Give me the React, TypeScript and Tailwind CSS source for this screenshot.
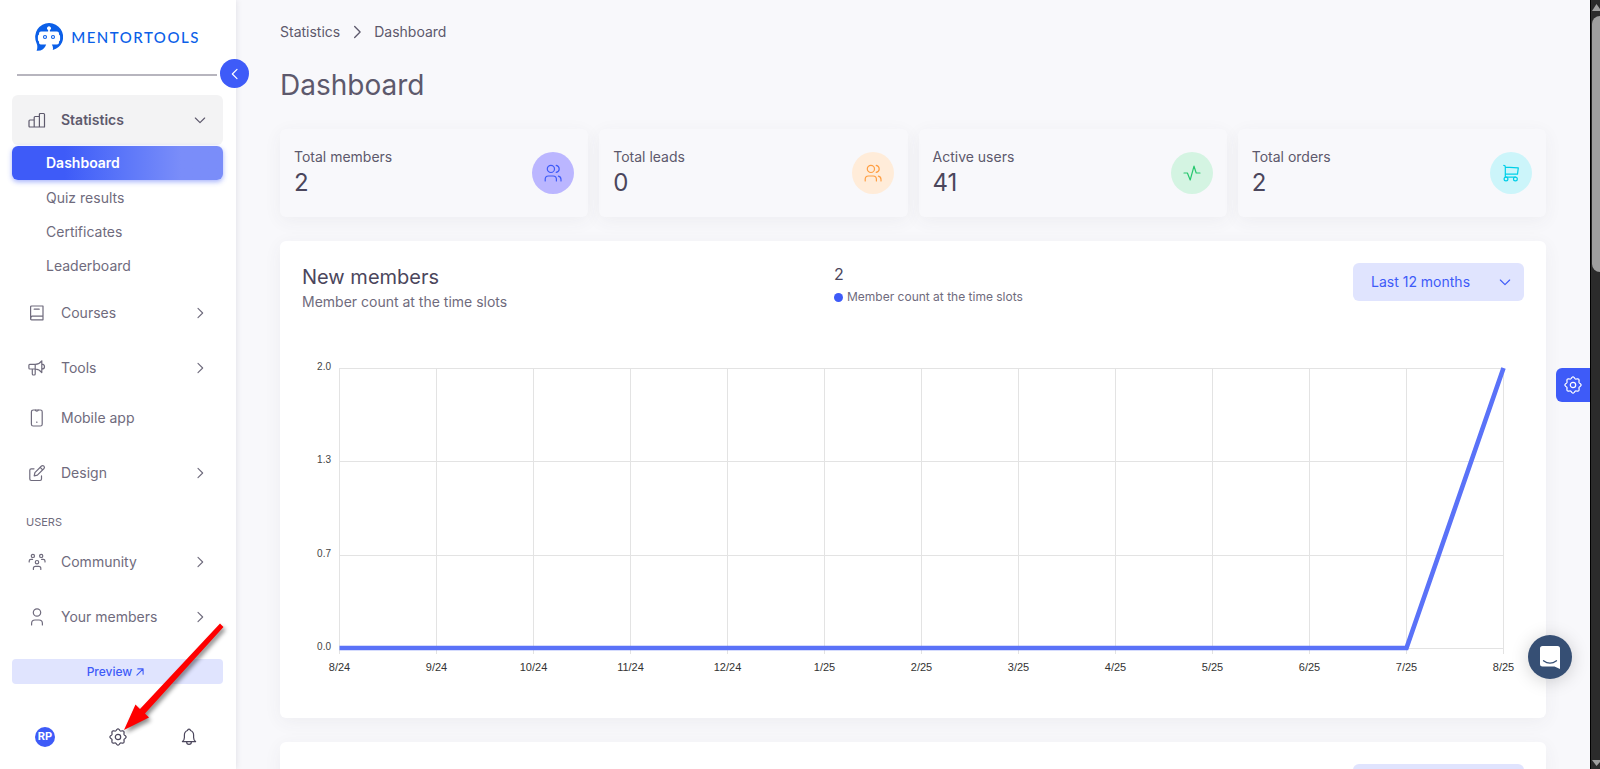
import type { ReactNode } from "react";

type IconProps = { className?: string; children?: ReactNode };

function Icon({ className = "size-[18px]", children }: IconProps) {
  return (
    <svg
      viewBox="0 0 18 18"
      fill="none"
      stroke="currentColor"
      strokeWidth="1.2"
      strokeLinecap="round"
      strokeLinejoin="round"
      aria-hidden="true"
      className={`shrink-0 ${className}`}
    >
      {children}
    </svg>
  );
}

const StatsIcon = () => (
  <Icon>
    <path d="M1 9.9q0-.9.9-.9H6.2V16H1.9q-.9 0-.9-.9zM6.2 9V6.4q0-.9.9-.9h4.3V16H6.2M11.4 5.500V3.400q0-.9.9-.9h3.300q.9 0 .9.9V16h-5.100" />
  </Icon>
);

const BookIcon = () => (
  <Icon>
    <path d="M3.6 2h11.4v13.8H3.6q-1 0-1-1V3q0-1 1-1zM2.8 14.4q0-2.2 1.4-2.2H15M6.2 5.2h5" />
  </Icon>
);

const MegaphoneIcon = () => (
  <Icon>
    <path d="M1.8 5.4h5.4V10H1.8q-.9 0-.9-.9V6.3q0-.9.9-.9zM7.2 5.4q4.2-.3 6.6-3.6v11.8q-2.4-3.3-6.6-3.6M4.3 10v5q0 1 1 1h.9q1 0 1-1v-5M13.8 5.2q2.7.3 2.7 2.5t-2.7 2.5" />
  </Icon>
);

const PhoneIcon = () => (
  <Icon>
    <rect x="3.4" y="1" width="10.8" height="16" rx="1.8" />
    <path d="M7.4 1.2q.2 1 1.4 1t1.4-1M8.6 13.2h.4" />
  </Icon>
);

const EditIcon = () => (
  <Icon>
    <path d="M6 4.8H3.2q-1.4 0-1.4 1.4v8.9q0 1.4 1.4 1.4h8.9q1.4 0 1.4-1.4v-3.2M6.2 11.8l.7-3.2 6.6-6.6q1.2-1 2.4.1 1.1 1.2.1 2.4l-6.6 6.6zM12.2 3.4l2.4 2.4" />
  </Icon>
);

const CommunityIcon = () => (
  <Icon>
    <circle cx="4.9" cy="2.9" r="1.6" />
    <circle cx="13.2" cy="2.9" r="1.6" />
    <circle cx="9" cy="9.2" r="1.7" />
    <path d="M1.2 9V8q0-1.6 1.8-1.6h1.6M17 9V8q0-1.6-1.8-1.6h-1.6M5.4 16.4v-1.1q0-1.9 2-1.9h3.4q2 0 2 1.9v1.1" />
  </Icon>
);

const UserIcon = () => (
  <Icon>
    <circle cx="9" cy="4.5" r="3.7" />
    <path d="M3.6 17v-1.6q0-3.4 3.4-3.4h4q3.4 0 3.4 3.4V17" />
  </Icon>
);

const UsersIcon = () => (
  <Icon>
    <circle cx="6.9" cy="4.9" r="3.6" />
    <path d="M1.2 17v-1.8q0-3.2 3.2-3.2h4.8q3.2 0 3.2 3.2V17M12.2 1.4q3 .8 3 3.5t-3 3.5M14.4 12.2q2.6.6 2.6 3.2V17" />
  </Icon>
);

const PulseIcon = () => (
  <Icon>
    <path d="M1 9h3.4l2.8 7L11 2.2 13.2 9H17" />
  </Icon>
);

const CartIcon = () => (
  <Icon>
    <circle cx="4" cy="15" r="1.9" />
    <circle cx="13.4" cy="15" r="1.9" />
    <path d="M1.8 1.4q1.5 0 1.5 1.4v10.3h10.1M3.3 3.2l13 .7-.8 6.2H3.3" />
  </Icon>
);

const BellIcon = () => (
  <Icon>
    <path d="M2.4 13.6q2-1.5 2-4.2V7q0-3.4 3.2-4.5a1.4 1.4 0 0 1 2.8 0q3.2 1.1 3.2 4.5v2.4q0 2.7 2 4.2zM6.6 13.8q0 2.6 2.4 2.6t2.4-2.6" />
  </Icon>
);

// eight soft teeth around the centre
const gearOutline = Array.from({ length: 96 }, (_, i) => {
  const a = (i / 96) * Math.PI * 2;
  const r = 7.3 + 0.8 * Math.cos(8 * a);
  return `${(9 + r * Math.cos(a)).toFixed(2)},${(9 + r * Math.sin(a)).toFixed(2)}`;
}).join(" ");

const GearIcon = () => (
  <Icon>
    <polygon points={gearOutline} />
    <circle cx="9" cy="9" r="2.7" />
  </Icon>
);

const ChevronRight = ({ className = "size-3" }: IconProps) => (
  <Icon className={className}>
    <path strokeWidth="1.7" d="M6 2l7 7-7 7" />
  </Icon>
);

const ChevronDown = ({ className = "size-3" }: IconProps) => (
  <Icon className={className}>
    <path strokeWidth="1.7" d="M2 6l7 7 7-7" />
  </Icon>
);

function Logo() {
  return (
    <a href="#" className="flex items-center gap-2 text-[#0b5fe8]">
      <svg viewBox="0 0 28 28" className="size-7 shrink-0" aria-hidden="true">
        <path
          fill="currentColor"
          d="M14 0A14 14 0 0 0 1.3 19.5Q3.2 23.5 1.6 27.8Q9 28.2 11.2 21.5H5.8Q4 21.5 4 19.5V18.6Q2.9 18.2 2.9 16.5V13.5Q2.9 12 4 11.6V10.5Q4 8.500 6 8.500H13.1V6.9A1.9 1.9 0 1 1 14.9 6.9V8.5H22Q24 8.5 24 10.5V11.6Q25.1 12 25.1 13.5V16.5Q25.1 18.2 24 18.6V19.5Q24 21.5 22 21.5H16.8Q18.5 24 17.8 27Q24.5 25 27 19.5A14 14 0 0 0 14 0Z"
        />
        <circle cx="10" cy="14" r="1.5" fill="none" stroke="currentColor" strokeWidth="1.1" />
        <circle cx="18" cy="14" r="1.5" fill="none" stroke="currentColor" strokeWidth="1.1" />
      </svg>
      <span className="font-['Lato',sans-serif] text-[15px] leading-5 font-medium tracking-widest">
        MENTORTOOLS
      </span>
    </a>
  );
}

type NavItemProps = { icon: ReactNode; label: string; expandable?: boolean };

function NavItem({ icon, label, expandable = true }: NavItemProps) {
  if (!expandable) {
    return (
      <a href="#" className="flex h-[50px] items-center gap-[15px] px-4">
        {icon}
        {label}
      </a>
    );
  }
  return (
    <button type="button" className="mt-[5px] flex h-[50px] items-center gap-[15px] px-4">
      {icon}
      {label}
      <ChevronRight className="mr-px ml-auto size-3" />
    </button>
  );
}

function Sidebar() {
  return (
    <aside className="relative z-10 flex w-[236px] shrink-0 flex-col bg-white pr-[13px] pl-3 text-sm text-[#6f6b7d] shadow-[0_0_6px_rgba(75,70,92,0.15)]">
      <div className="flex h-[74px] shrink-0 justify-center pt-[23px]">
        <div className="h-7">
          <Logo />
        </div>
      </div>
      <hr className="mr-[6px] ml-[5px] border-t-2 border-[#b7b5be]" />
      <button
        type="button"
        aria-label="Collapse menu"
        className="absolute top-[59px] -right-[13px] flex size-[29px] items-center justify-center rounded-full bg-[#3e5bf8] text-white"
      >
        <Icon className="size-3">
          <path strokeWidth="1.8" d="M12 2L5 9l7 7" />
        </Icon>
      </button>

      <nav className="mt-[19px] flex flex-col">
        <button
          type="button"
          className="flex h-[50px] shrink-0 items-center gap-[15px] rounded-md bg-[#f3f3f4] px-4 font-semibold text-[#5d596c]"
        >
          <StatsIcon />
          Statistics
          <ChevronDown className="mr-px ml-auto size-3" />
        </button>
        <a
          href="#"
          className="mt-px mb-px flex h-[34px] items-center rounded-md bg-linear-to-r from-[#3e5bf8] from-25% to-[#7a8df9] to-80% pl-[34px] font-semibold text-white shadow-[0_2px_5px_rgba(62,91,248,0.45)]"
        >
          Dashboard
        </a>
        <a href="#" className="flex h-[34px] items-center pl-[34px]">Quiz results</a>
        <a href="#" className="flex h-[34px] items-center pl-[34px]">Certificates</a>
        <a href="#" className="flex h-[34px] items-center pl-[34px]">Leaderboard</a>

        <NavItem icon={<BookIcon />} label="Courses" />
        <NavItem icon={<MegaphoneIcon />} label="Tools" />
        <NavItem icon={<PhoneIcon />} label="Mobile app" expandable={false} />
        <NavItem icon={<EditIcon />} label="Design" />
        <h2 className="px-[14px] pt-4 pb-0.5 text-[11px] leading-4">USERS</h2>
        <NavItem icon={<CommunityIcon />} label="Community" />
        <NavItem icon={<UserIcon />} label="Your members" />
      </nav>

      <a
        href="#"
        className="mt-[17px] flex h-[25px] shrink-0 items-center justify-center gap-1 rounded bg-[#e0e4fe] pr-1 text-xs font-medium text-[#3e5bf8]"
      >
        Preview
        <Icon className="size-2">
          <path strokeWidth="2.4" d="M2 16L16 2M4 2h12v12" />
        </Icon>
      </a>
      <div className="mt-10 flex h-[26px] shrink-0 items-center justify-between pr-[25px] pl-[23px] text-[#4b465c]">
        <button
          type="button"
          className="flex size-5 items-center justify-center rounded-full bg-[#3e5bf8] text-[11px] font-bold text-white"
        >
          RP
        </button>
        <button type="button" aria-label="Settings">
          <GearIcon />
        </button>
        <button type="button" aria-label="Notifications">
          <BellIcon />
        </button>
      </div>
    </aside>
  );
}

const stats = [
  { label: "Total members", value: 2, icon: <UsersIcon />, color: "bg-[#bbb6ff] text-[#3e5bf8]" },
  { label: "Total leads", value: 0, icon: <UsersIcon />, color: "bg-[#ffecd9] text-[#ff9f43]" },
  { label: "Active users", value: 41, icon: <PulseIcon />, color: "bg-[#d4f4e2] text-[#28c76f]" },
  { label: "Total orders", value: 2, icon: <CartIcon />, color: "bg-[#ccf5fa] text-[#00cfe8]" },
];

const months = [
  "8/24", "9/24", "10/24", "11/24", "12/24", "1/25", "2/25",
  "3/25", "4/25", "5/25", "6/25", "7/25", "8/25",
];
const members = [0, 0, 0, 0, 0, 0, 0, 0, 0, 0, 0, 0, 2];
const ticks = ["2.0", "1.3", "0.7", "0.0"];

const chartX = (i: number) => 37.5 + i * 97;
const chartY = (v: number) => 298 - v * 140;

function LineChart() {
  return (
    <svg
      viewBox="0 0 1222 325"
      role="img"
      aria-label="New members per month"
      className="block w-full overflow-visible font-['Liberation_Sans',Arial,sans-serif]"
    >
      {ticks.map((tick, i) => {
        const y = 18.5 + Math.round((i * 280) / 3);
        return (
          <g key={tick}>
            <line x1="37" x2="1202" y1={y} y2={y} stroke="#e3e3e3" />
            <text x="29" y={y + 1} textAnchor="end" fontSize="10" fill="#444">
              {tick}
            </text>
          </g>
        );
      })}
      {months.map((month, i) => (
        <g key={month}>
          <line x1={chartX(i)} x2={chartX(i)} y1="18" y2="304" stroke="#e3e3e3" />
          <text x={chartX(i)} y="321" textAnchor="middle" fontSize="11" fill="#333">
            {month}
          </text>
        </g>
      ))}
      <polyline
        points={members.map((v, i) => `${chartX(i)},${chartY(v)}`).join(" ")}
        fill="none"
        stroke="#5a72f8"
        strokeWidth="4.6"
      />
    </svg>
  );
}

type ReportCardProps = { id: string; title: string; caption: string; total: number };

function ReportCard({ id, title, caption, total }: ReportCardProps) {
  return (
    <section className="mt-6 shrink-0 rounded-md bg-white px-[22px] pt-[22px] pb-[43px] shadow-[0_4px_18px_rgba(75,70,92,0.06)]">
      <div className="grid grid-cols-[532px_1fr_auto] items-start">
        <div>
          <h2 className="text-xl leading-7 text-[#4b465c]">{title}</h2>
          <p className="text-sm leading-[22px] text-[#6f6b7d]">{caption}</p>
        </div>
        <div>
          <p className="text-base leading-[22px] text-[#4b465c]">{total}</p>
          <p className="flex items-center gap-1 text-xs leading-6 text-[#6f6b7d]">
            <span className="size-[9px] rounded-full bg-[#3e5bf8]" />
            {caption}
          </p>
        </div>
        <div className="relative text-[#3e5bf8]">
          <select
            id={id}
            aria-label="Period"
            className="block h-[38px] w-[171px] appearance-none rounded-md bg-[#e0e4fe] px-[18px] text-sm"
          >
            <option>Last 12 months</option>
          </select>
          <ChevronDown className="pointer-events-none absolute top-[13px] right-[13px] size-3" />
        </div>
      </div>
      <div className="mt-[37px]">
        <LineChart />
      </div>
    </section>
  );
}

function Scrollbar() {
  return (
    <div className="flex w-[10px] shrink-0 flex-col items-end border-l border-black bg-[#2b2b2b]" aria-hidden="true">
      <svg viewBox="0 0 8 12" className="h-3 w-2">
        <path d="M0 11L4.5 4L8 9V11Z" fill="#9f9f9f" />
      </svg>
      <div className="mt-1 h-1/3 w-2 rounded-l-full bg-[#9f9f9f]" />
      <svg viewBox="0 0 8 12" className="mt-auto h-3 w-2">
        <path d="M0 3H8V5L4.5 9Z" fill="#9f9f9f" />
      </svg>
    </div>
  );
}

function PointerArrow() {
  return (
    <svg
      viewBox="0 0 110 115"
      className="pointer-events-none absolute bottom-9 left-[120px] z-20 h-[115px] w-[110px] drop-shadow-[2px_3px_2px_rgba(0,0,0,0.45)]"
      aria-hidden="true"
    >
      <path d="M4 112L15.5 86.5L20 91L100 5.500L103.500 9L25 95.500L29 99.500Z" fill="#fe0000" />
    </svg>
  );
}

export default function App() {
  return (
    <div className="relative flex h-screen overflow-hidden bg-[#f8f8fb] font-['Inter',sans-serif]">
      <Sidebar />

      <main className="flex min-w-0 flex-1 flex-col overflow-y-auto px-11 pb-6 text-[#5d596c] [scrollbar-width:none]">
        <nav aria-label="Breadcrumb" className="mt-5 flex shrink-0 items-center gap-[10px] text-sm leading-6">
          <a href="#">Statistics</a>
          <ChevronRight className="size-[14px]" />
          <span>Dashboard</span>
        </nav>
        <h1 className="mt-[21px] shrink-0 text-[28px] leading-10">Dashboard</h1>

        <div className="mt-6 grid shrink-0 grid-cols-4 gap-[11px]">
          {stats.map((stat) => (
            <div
              key={stat.label}
              className="flex h-[88px] items-center justify-between rounded-md px-[14px] shadow-[0_4px_18px_rgba(75,70,92,0.06)]"
            >
              <div>
                <p className="text-sm leading-5">{stat.label}</p>
                <p className="text-2xl leading-8 text-[#4b465c]">{stat.value}</p>
              </div>
              <div className={`flex size-[42px] items-center justify-center rounded-full ${stat.color}`}>
                {stat.icon}
              </div>
            </div>
          ))}
        </div>

        <ReportCard id="members-period" title="New members" caption="Member count at the time slots" total={2} />
        <ReportCard id="leads-period" title="New leads" caption="Lead count at the time slots" total={2} />
      </main>

      <Scrollbar />

      <button
        type="button"
        aria-label="Customize"
        className="absolute top-[368px] right-[10px] flex size-[34px] items-center justify-center rounded-l-md bg-[#3e5bf8] text-white"
      >
        <GearIcon />
      </button>
      <button
        type="button"
        aria-label="Open chat"
        className="absolute right-7 bottom-[90px] flex size-11 items-center justify-center rounded-full bg-[#364f74] shadow-[0_2px_18px_rgba(0,0,0,0.18)]"
      >
        <svg viewBox="0 0 20 23" className="h-[23px] w-5" aria-hidden="true">
          <path d="M2.5 0H17.5Q20 0 20 2.5V23L14.5 20.5H2.5Q0 20.5 0 18V2.5Q0 0 2.5 0Z" fill="#fff" />
          <path d="M3.5 14.8Q10 19.6 16.5 14.8" fill="none" stroke="#364f74" strokeWidth="1.3" strokeLinecap="round" />
        </svg>
      </button>
      <PointerArrow />
    </div>
  );
}
